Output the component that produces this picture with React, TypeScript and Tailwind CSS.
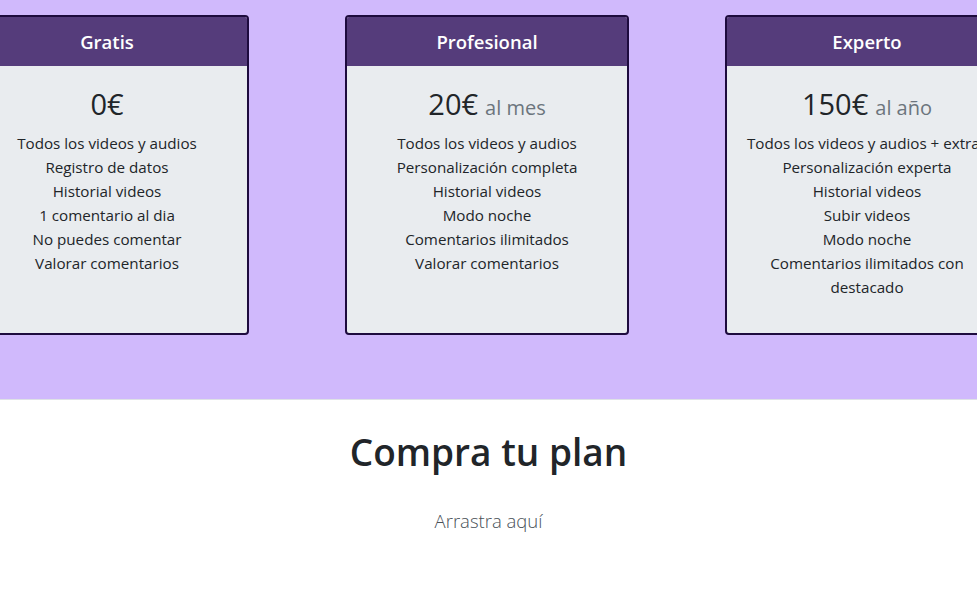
import React from "react";

type Plan = {
  title: string;
  price: string;
  suffix?: string;
  items: string[];
};

const plans: Plan[] = [
  {
    title: "Gratis",
    price: "0€",
    items: [
      "Todos los videos y audios",
      "Registro de datos",
      "Historial videos",
      "1 comentario al dia",
      "No puedes comentar",
      "Valorar comentarios",
    ],
  },
  {
    title: "Profesional",
    price: "20€",
    suffix: "al mes",
    items: [
      "Todos los videos y audios",
      "Personalización completa",
      "Historial videos",
      "Modo noche",
      "Comentarios ilimitados",
      "Valorar comentarios",
    ],
  },
  {
    title: "Experto",
    price: "150€",
    suffix: "al año",
    items: [
      "Todos los videos y audios + extras",
      "Personalización experta",
      "Historial videos",
      "Subir videos",
      "Modo noche",
      "Comentarios ilimitados con destacado",
    ],
  },
];

function Card({ plan }: { plan: Plan }) {
  return (
    <div className="flex h-[320px] w-[284px] shrink-0 flex-col overflow-hidden rounded-[4px] border-2 border-[#1e0b3e] bg-[#e9ecef]">
      <div className="flex h-[49px] shrink-0 items-center justify-center bg-[#553c7b] text-[18.5px] font-semibold text-white">
        {plan.title}
      </div>
      <div className="flex flex-col items-center px-5 pt-5 text-center">
        <h1 className="mb-[9px] h-[36px] text-[29px] font-medium leading-[36px] text-[#212529]">
          {plan.price}
          {plan.suffix && (
            <small className="ml-[7px] text-[20px] font-normal leading-none text-[#6c757d]">
              {plan.suffix}
            </small>
          )}
        </h1>
        <ul className="w-[240px] text-[15.2px] leading-[24px] text-[#212529]">
          {plan.items.map((it) => (
            <li key={it}>{it}</li>
          ))}
        </ul>
      </div>
    </div>
  );
}

export default function App() {
  return (
    <div
      className="min-h-[603px] bg-white"
      style={{ fontFamily: '"Open Sans", "Noto Sans", sans-serif' }}
    >
      <section className="flex justify-center gap-[96px] overflow-hidden border-b border-[#dee2e6] bg-[#d0b9fc] pt-[15px] pb-[64px] pr-[3px]">
        {plans.map((p) => (
          <Card key={p.title} plan={p} />
        ))}
      </section>
      <div className="flex flex-col items-center pt-[28px] text-center">
        <h1 className="text-[37px] font-semibold leading-[48px] text-[#212529]">
          Compra tu plan
        </h1>
        <p className="mt-[30px] text-[18.5px] font-light leading-[30px] text-[#495057]">
          Arrastra aquí
        </p>
      </div>
    </div>
  );
}
